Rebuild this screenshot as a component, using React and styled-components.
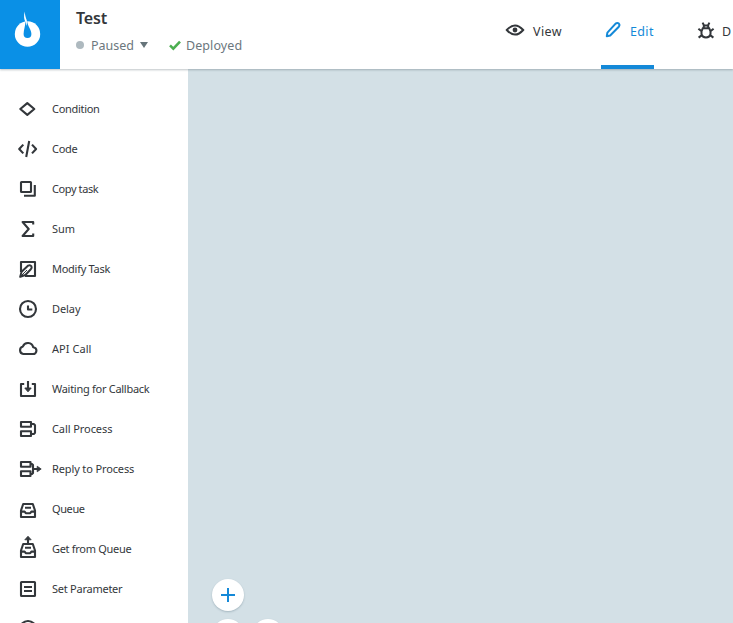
import React from 'react';
import styled, { createGlobalStyle } from 'styled-components';

const Global = createGlobalStyle`
  * { box-sizing: border-box; }
  body { margin: 0; overflow: hidden; font-family: "Noto Sans", "Open Sans", sans-serif; color: #33373b; background: #fff; }
`;

const Page = styled.div`
  width: 733px;
  height: 623px;
  display: flex;
  flex-direction: column;
  overflow: hidden;
`;

const Header = styled.header`
  flex: 0 0 69px;
  display: flex;
  background: #fff;
  z-index: 1;
  box-shadow: 0 1px 2px rgba(40, 60, 70, 0.3);
`;

const Logo = styled.div`
  flex: 0 0 60px;
  background: #0a90e6;
  svg { display: block; }
`;

const Info = styled.div`
  flex: 1;
  padding: 6px 0 0 16px;
`;

const Title = styled.h1`
  margin: 0;
  height: 24px;
  font-size: 16px;
  line-height: 24px;
  font-weight: 600;
  letter-spacing: -0.2px;
  white-space: nowrap;
`;

const StatusLine = styled.div`
  display: flex;
  align-items: center;
  height: 20px;
  margin-top: 5px;
  color: #6c777d;
`;

const Label = styled.span`
  width: ${(p) => (p.$w ? `${p.$w}px` : 'auto')};
  font-size: ${(p) => p.$size || 12}px;
  letter-spacing: ${(p) => p.$ls || 0}px;
  white-space: nowrap;
`;

const Dot = styled.span`
  width: 8px;
  height: 8px;
  margin-right: 7px;
  border-radius: 50%;
  background: #aeb9bf;
`;

const Caret = styled.span`
  margin: 0 21px 0 5px;
  border: 4.5px solid transparent;
  border-top: 6px solid #66747a;
  border-bottom: 0;
`;

const Check = styled.svg`
  width: 12px;
  height: 12px;
  margin-right: 5px;
  fill: none;
  stroke: #4caf50;
  stroke-width: 2.6;
`;

const Tabs = styled.nav`
  display: flex;
  flex: 0 0 228px;
`;

const Tab = styled.div`
  flex: 0 0 auto;
  display: flex;
  align-items: flex-start;
  width: ${(p) => p.$w}px;
  margin-right: ${(p) => p.$gap || 0}px;
  padding-top: 20px;
  line-height: 24px;
  color: ${(p) => (p.$active ? '#1489d8' : '#33373b')};
  border-bottom: 4px solid ${(p) => (p.$active ? '#1489d8' : 'transparent')};
`;

const TabIcon = styled.svg`
  flex: 0 0 auto;
  width: 20px;
  height: 20px;
  margin-right: ${(p) => p.$gap}px;
  fill: none;
  stroke: currentColor;
  stroke-width: 2;
`;

const Body = styled.div`
  flex: 1;
  display: flex;
  min-height: 0;
`;

const Sidebar = styled.aside`
  flex: 0 0 188px;
  padding-top: 20px;
  overflow: hidden;
  background: #fff;
`;

const Item = styled.div`
  display: flex;
  align-items: center;
  height: 40px;
  padding-left: 14px;
  line-height: 14px;
`;

const ItemIcon = styled.svg`
  flex: 0 0 28px;
  width: 28px;
  height: 28px;
  margin-right: 10px;
  fill: none;
  stroke: #33373b;
  stroke-width: 2.1;
  stroke-linejoin: round;
`;

const Canvas = styled.main`
  flex: 1;
  display: flex;
  flex-direction: column;
  justify-content: flex-end;
  overflow: hidden;
  background: #d3e0e6;
`;

const Controls = styled.div`
  display: grid;
  grid-template-columns: 32px 32px;
  gap: 8px;
  padding-left: 24px;
  margin-bottom: -28px;
`;

const RoundButton = styled.button`
  display: grid;
  place-items: center;
  grid-column: ${(p) => p.$col};
  width: 32px;
  height: 32px;
  padding: 0;
  border: 0;
  border-radius: 50%;
  background: #fff;
  box-shadow: 0 1px 2px rgba(60, 90, 105, 0.3);
`;

const tray = (
  <path d="M9.2 9h9.600L21 15.500V22H7v-6.500zM7 16.600h3.600l1.200 1.600h4.400l1.200-1.600H21M11 12.800h6" />
);

const items = [
  ['Condition', -0.3, <path d="M6.300 14l7-5.900 7 5.900-7 5.900z" />],
  ['Code', -0.3, <path d="M9.300 9.600L5.200 14l4.100 4.400M18 9.600l4.100 4.400-4.100 4.400M15.200 6l-3 16" />],
  ['Copy task', -0.4, <><rect x="7" y="7" width="10" height="10" rx="0.6" /><path d="M20.800 10v10.800H10" /></>],
  ['Sum', -0.1, <path d="M19.200 9.600V7H8.600l6.100 7-6.100 7h10.600v-2.600" />],
  ['Modify Task', -0.27, <><path d="M7 17V7h14v14H11" /><path strokeWidth="2" d="M6.200 21.800l1.400-5 6.600-6.200q2.100-1 3.200.7.800 1.600-.6 3L11.400 20z" /><path strokeWidth="1" d="M7 21l6-6" /></>],
  ['Delay', -0.08, <><circle cx="14" cy="14" r="8" /><path d="M14 10.500v4h4.300" /></>],
  ['API Call', 0.05, <path d="M9.300 19h9.600a3.400 3.400 0 0 0 .3-6.800 5.400 5.400 0 0 0-10.300-.8A3.900 3.900 0 0 0 9.300 19z" />],
  ['Waiting for Callback', -0.28, <><path d="M10.200 9H7v12h14V9h-3.200M14 6v9" /><path d="M10.800 13h6.400L14 16.800z" fill="#33373b" strokeWidth="1" /></>],
  ['Call Process', -0.08, <path d="M7 7h10v4.800H7zM7 16.200h10V21H7zM17 9h2.800l1.200 1.200v7.600L19.800 19H17" />],
  ['Reply to Process', -0.13, <><path d="M7 7h9.500v4.800H7zM7 16.200h9.500V21H7zM16.500 9H18l1 1v8l-1 1h-1.500M19 14h5" /><path d="M23.200 11.200v5.600l4-2.800z" fill="#33373b" strokeWidth="0.8" /></>],
  ['Queue', -0.4, tray],
  ['Get from Queue', -0.3, <>{tray}<path d="M14 9V4" /><path d="M10.800 4.800L14 1.200l3.200 3.600z" fill="#33373b" strokeWidth="0.8" /></>],
  ['Set Parameter', -0.25, <><rect x="7" y="7" width="14" height="14" rx="0.6" /><path d="M10 12h8M10 16h8" strokeWidth="2" /></>],
  ['', 0, <circle cx="14" cy="14" r="8" />],
];

export default function App() {
  return (
    <Page>
      <Global />
      <Header>
        <Logo>
          <svg width="60" height="69" viewBox="0 0 60 69">
            <circle cx="27.500" cy="34" r="12.700" fill="#fff" />
            <path fill="#0a90e6" d="M25.200 20.800C25.700 26 23.600 29.500 23.600 34a3.900 3.900 0 0 0 7.800 0c0-4.800-3.900-7.500-4.300-13.200z" />
            <path fill="#fff" d="M24.900 11.500c-1.500 4.200-.8 7.600.3 10 .6 1.700 1 3 1.100 4.500.7-2.200.9-4.200.3-6.200-.9-2.600-1.800-4.600-1.700-8.300z" />
          </svg>
        </Logo>
        <Info>
          <Title>Test</Title>
          <StatusLine>
            <Dot />
            <Label $w={44} $size={12.5}>Paused</Label>
            <Caret />
            <Check viewBox="0 0 12 12"><path d="M1 6.400l3.300 3.200L11 2.600" /></Check>
            <Label $size={12.5} $ls={0.08}>Deployed</Label>
          </StatusLine>
        </Info>
        <Tabs>
          <Tab $w={57} $gap={39}>
            <TabIcon $gap={8} viewBox="0 0 20 20">
              <path d="M1.800 10Q10 .8 18.200 10 10 19.200 1.800 10z" />
              <circle cx="10" cy="10" r="2.400" fill="currentColor" stroke="none" />
            </TabIcon>
            <Label $size={12.5} $ls={0.4}>View</Label>
          </Tab>
          <Tab $active $w={53} $gap={43}>
            <TabIcon $gap={9} viewBox="0 0 20 20">
              <path d="M5.800 16.200l.6-3.600 8.200-9q1.800-1.300 3.200 0 1.300 1.400 0 3.100l-8.600 8.800z" strokeLinejoin="round" />
            </TabIcon>
            <Label $size={12.5} $ls={0.35}>Edit</Label>
          </Tab>
          <Tab $w={36}>
            <TabIcon $gap={5} viewBox="0 0 20 20">
              <path d="M5.800 8.200h6.400l1.300 3.300v2.800q-.8 3.200-4.500 3.200t-4.500-3.200v-2.800zM6.800 8V5.400h4.400V8M6.900 5.200L5.600 2.600M11.100 5.200l1.300-2.600M1.400 8.700l3.200 2.600M16.600 8.700l-3.200 2.600M1.600 17.600l3.300-2.500M16.400 17.600l-3.300-2.500" />
            </TabIcon>
            <Label $size={12.5}>D</Label>
          </Tab>
        </Tabs>
      </Header>
      <Body>
        <Sidebar>
          {items.map(([name, ls, icon], i) => (
            <Item key={i}>
              <ItemIcon viewBox="0 0 28 28">{icon}</ItemIcon>
              <Label $size={11} $ls={ls}>{name}</Label>
            </Item>
          ))}
        </Sidebar>
        <Canvas>
          <Controls>
            <RoundButton $col={1}>
              <svg width="14" height="14" viewBox="0 0 14 14" stroke="#1489d8" strokeWidth="2">
                <path d="M7 0v14M0 7h14" />
              </svg>
            </RoundButton>
            <RoundButton $col={1} />
            <RoundButton $col={2} />
          </Controls>
        </Canvas>
      </Body>
    </Page>
  );
}
